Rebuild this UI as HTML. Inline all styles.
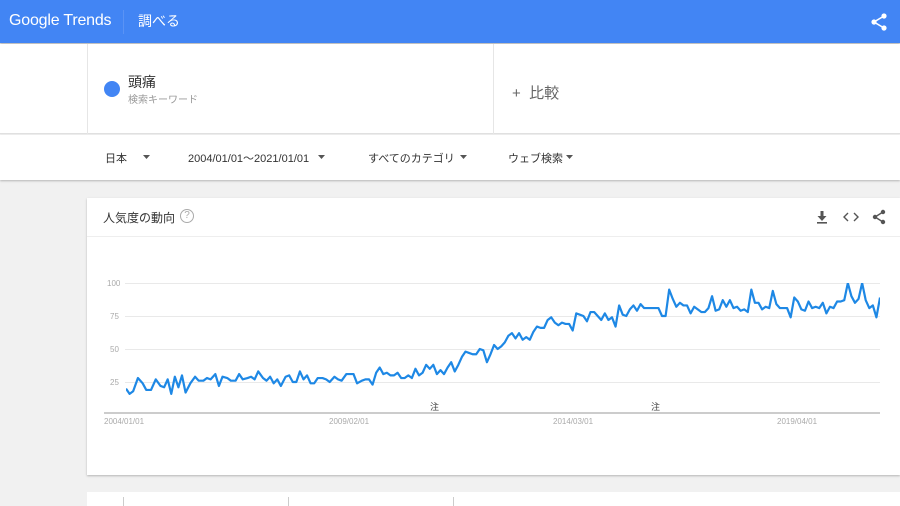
<!DOCTYPE html>
<html><head><meta charset="utf-8"><style>
*{margin:0;padding:0;box-sizing:border-box}
body{width:900px;height:506px;overflow:hidden;background:#f1f1f1;font-family:"Liberation Sans","Noto Sans CJK JP",sans-serif;position:relative}
.a{position:absolute;white-space:nowrap}
</style></head><body>
<div class="a" style="left:0;top:0;width:900px;height:43px;background:#4285f4;box-shadow:0 1px 2px rgba(0,0,0,.3)"></div>
<div class="a" style="left:9px;top:12px;color:#fff;font-size:16px;letter-spacing:-0.2px">Google Trends</div>
<div class="a" style="left:123px;top:10px;width:1px;height:24px;background:#5a93f5"></div>
<div class="a" style="left:138px;top:11px;color:#fff;font-size:14px">調べる</div>
<svg class="a" style="left:871px;top:13px" width="16" height="18" viewBox="0 0 16 18"><g fill="#fff"><circle cx="13" cy="3" r="2.6"/><circle cx="3" cy="9" r="2.6"/><circle cx="13" cy="15" r="2.6"/></g><path d="M13 3L3 9L13 15" stroke="#fff" stroke-width="1.6" fill="none"/></svg>

<div class="a" style="left:0;top:44px;width:900px;height:90px;background:#fff;border-bottom:1px solid #e0e0e0"></div>
<div class="a" style="left:87px;top:44px;width:1px;height:90px;background:#e6e6e6"></div>
<div class="a" style="left:493px;top:44px;width:1px;height:90px;background:#e6e6e6"></div>
<div class="a" style="left:104px;top:81px;width:16px;height:16px;border-radius:50%;background:#4285f4"></div>
<div class="a" style="left:128px;top:72px;font-size:14px;color:#333">頭痛</div>
<div class="a" style="left:128px;top:91px;font-size:10px;color:#999">検索キーワード</div>
<div class="a" style="left:512px;top:82px;font-size:15px;color:#666">+&nbsp;&nbsp;比較</div>

<div class="a" style="left:0;top:135px;width:900px;height:45px;background:#fff;box-shadow:0 1px 2px rgba(0,0,0,.25)"></div>
<div class="a" style="left:105px;top:150px;font-size:11px;color:#333">日本</div>
<div class="a" style="left:188px;top:150px;font-size:11px;color:#333">2004/01/01～2021/01/01</div>
<div class="a" style="left:368px;top:150px;font-size:11px;color:#333">すべてのカテゴリ</div>
<div class="a" style="left:508px;top:150px;font-size:11px;color:#333">ウェブ検索</div>
<svg class="a" style="left:0;top:150px" width="900" height="14"><g fill="#555"><path d="M143 5h7l-3.5 4z"/><path d="M318 5h7l-3.5 4z"/><path d="M460 5h7l-3.5 4z"/><path d="M566 5h7l-3.5 4z"/></g></svg>

<div class="a" style="left:87px;top:198px;width:813px;height:277px;background:#fff;box-shadow:0 1px 2px rgba(0,0,0,.25)"></div>
<div class="a" style="left:87px;top:236px;width:813px;height:1px;background:#eee"></div>
<div class="a" style="left:103px;top:209px;font-size:12px;color:#333">人気度の動向</div>
<div class="a" style="left:180px;top:209px;width:14px;height:14px;border:1px solid #aaa;border-radius:50%;font-size:10px;color:#aaa;text-align:center;line-height:12px">?</div>
<svg class="a" style="left:810px;top:208px" width="80" height="18" viewBox="0 0 80 18"><g fill="#555"><path d="M10.5 3h3v5h3l-4.5 5l-4.5-5h3z"/><rect x="7" y="14" width="10" height="1.6"/></g><path d="M38 5l-4 4l4 4M44 5l4 4l-4 4" stroke="#555" stroke-width="1.4" fill="none"/><g fill="#555"><circle cx="73" cy="4" r="2.2"/><circle cx="65" cy="9" r="2.2"/><circle cx="73" cy="14" r="2.2"/></g><path d="M73 4L65 9L73 14" stroke="#555" stroke-width="1.4" fill="none"/></svg>

<svg class="a" style="left:0;top:0" width="900" height="506">
<g stroke="#e9e9e9" stroke-width="1"><line x1="125" y1="283.5" x2="880" y2="283.5"/><line x1="125" y1="316.5" x2="880" y2="316.5"/><line x1="125" y1="349.5" x2="880" y2="349.5"/><line x1="125" y1="382.5" x2="880" y2="382.5"/></g>
<line x1="104" y1="413" x2="880" y2="413" stroke="#bbb" stroke-width="1.5"/>
<g font-size="8" fill="#aaa" font-family="Liberation Sans,sans-serif"><text x="107" y="286">100</text><text x="110" y="319">75</text><text x="110" y="352">50</text><text x="110" y="385">25</text>
<text x="104" y="424">2004/01/01</text><text x="329" y="424">2009/02/01</text><text x="553" y="424">2014/03/01</text><text x="777" y="424">2019/04/01</text></g>
<g font-size="9" fill="#444"><text x="430" y="410">注</text><text x="651" y="410">注</text></g>
</svg>
<svg class="a" style="left:126px;top:283px" width="754" height="132" viewBox="107 0 633 100" preserveAspectRatio="none">
<polyline fill="none" stroke="#1e88e5" stroke-width="2.2" vector-effect="non-scaling-stroke" stroke-linejoin="round" points="107,80 110,84 113,82 117,72 121,76 124,81 128,81 132,73 136,78 139,79 142,73 145,84 148,71 151,79 154,70 157,83 161,76 165,71 168,74 172,74 175,72 178,73 182,69 185,78 188,71 192,72 195,74 199,74 202,69 205,73 209,72 212,71 215,73 218,67 222,72 225,74 228,71 231,76 234,73 237,78 241,71 244,70 247,75 250,75 253,67 256,73 259,70 262,76 265,76 268,72 272,72 275,73 278,75 282,71 285,73 288,74 292,69 295,69 298,69 301,76 305,74 308,73 311,73 314,77 317,68 320,64 323,69 326,68 329,70 332,70 335,68 338,72 341,72 344,70 347,72 350,65 353,70 356,68 359,62 362,65 365,62 368,69 371,66 374,69 377,64 380,60 383,67 386,62 389,56 392,52 395,53 398,54 401,54 404,50 407,51 410,60 413,54 416,47 419,50 422,48 425,45 428,40 431,38 434,42 437,38 440,43 443,41 446,43 449,37 452,33 455,34 458,34 461,28 464,26 467,30 470,32 473,30 476,31 479,31 482,36 485,23 488,24 491,25 494,29 497,22 500,22 503,25 506,28 509,23 512,28 515,26 518,33 521,17 524,24 527,25 530,20 533,17 536,21 539,16 542,19 545,19 548,19 551,19 554,19 557,25 560,25 563,5 566,12 569,18 572,15 575,17 578,17 581,23 584,18 587,20 590,22 593,22 596,19 599,10 602,21 605,20 608,13 611,18 614,13 617,19 620,18 623,21 626,20 629,22 632,5 635,15 638,15 641,20 644,18 647,19 650,6 653,16 656,19 659,19 662,19 665,26 668,11 671,14 674,20 677,21 680,14 683,19 686,18 689,19 692,15 695,23 698,18 701,19 704,14 707,14 710,13 713,0 716,10 719,15 722,12 725,0 728,13 731,19 734,17 737,26 740,11"/>
</svg>

<div class="a" style="left:87px;top:492px;width:813px;height:14px;background:#fff"></div>
<div class="a" style="left:123px;top:497px;width:1px;height:9px;background:#ccc"></div>
<div class="a" style="left:288px;top:497px;width:1px;height:9px;background:#ccc"></div>
<div class="a" style="left:453px;top:497px;width:1px;height:9px;background:#ccc"></div>
</body></html>
